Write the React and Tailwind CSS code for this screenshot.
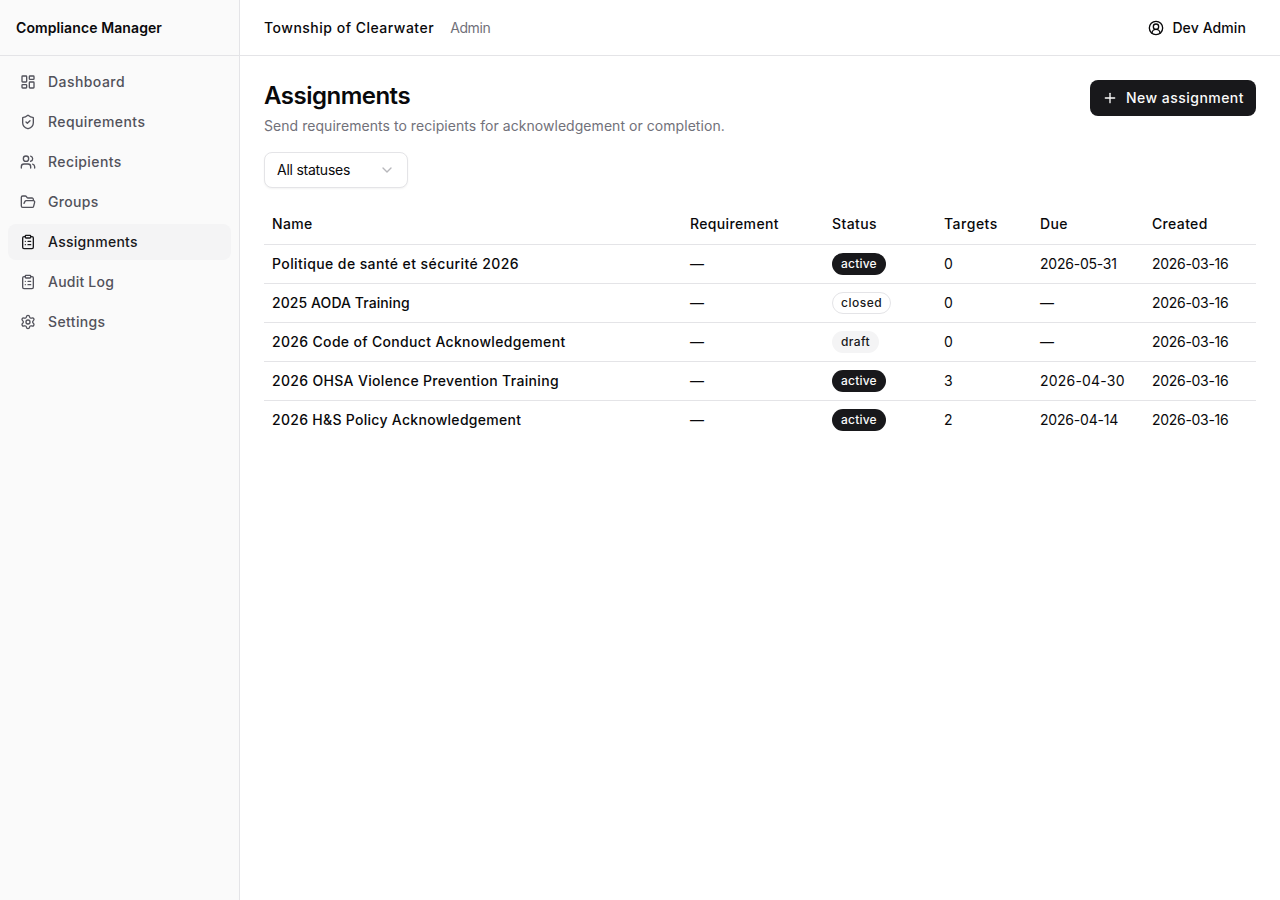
import { LayoutDashboard, ShieldCheck, Users, FolderOpen, ClipboardList, Settings, CircleUserRound, Plus, ChevronDown } from "lucide-react";

const nav = [
  ["Dashboard", LayoutDashboard, "tracking-[0.44px]"],
  ["Requirements", ShieldCheck, "tracking-[0.42px]"],
  ["Recipients", Users, "tracking-[0.4px]"],
  ["Groups", FolderOpen, "tracking-[0.33px]"],
  ["Assignments", ClipboardList, "tracking-[0.27px]", true],
  ["Audit Log", ClipboardList, "tracking-[0.22px]"],
  ["Settings", Settings, "tracking-[0.37px]"],
];

const rows = [
  ["Politique de santé et sécurité 2026", "tracking-[0.41px]", "active", "0", "2026-05-31", "tracking-[-0.23px]"],
  ["2025 AODA Training", "tracking-[0.08px]", "closed", "0", "—", ""],
  ["2026 Code of Conduct Acknowledgement", "tracking-[0.33px]", "draft", "0", "—", ""],
  ["2026 OHSA Violence Prevention Training", "tracking-[0.33px]", "active", "3", "2026-04-30", "tracking-[0.2px]"],
  ["2026 H&S Policy Acknowledgement", "tracking-[0.29px]", "active", "2", "2026-04-14", "tracking-[-0.2px]"],
];

const badge = {
  active: "bg-[#18181b] border-transparent text-[#fafafa] tracking-[0.2px]",
  closed: "bg-white border-[#e4e4e7] text-[#18181b] tracking-[0.5px]",
  draft: "bg-[#f4f4f5] border-transparent text-[#18181b] tracking-[0.4px]",
};

const heads = [
  ["Name", "w-[418px] tracking-[0.35px]"],
  ["Requirement", "w-[142px] tracking-[0.36px]"],
  ["Status", "w-[112px] tracking-[0.4px]"],
  ["Targets", "w-[96px] tracking-[0.5px]"],
  ["Due", "w-[112px] tracking-[0.3px]"],
  ["Created", "w-[112px] tracking-[0.35px]"],
];

export default function App() {
  return (
    <div className="flex h-[900px] bg-white text-[#09090b] font-['Inter',sans-serif] overflow-hidden">
      <aside className="w-[240px] shrink-0 bg-[#fafafa] border-r border-[#e4e4e7] flex flex-col">
        <div className="h-14 shrink-0 flex items-center px-4 border-b border-[#e4e4e7] text-sm font-semibold tracking-[0.1px]">Compliance Manager</div>
        <nav className="flex flex-col gap-1 p-2">
          {nav.map(([label, Icon, tracking, active]) => (
            <a key={label} className={"h-9 flex items-center gap-3 px-3 rounded-lg text-sm font-medium " + tracking + " " + (active ? "bg-[#f4f4f5] text-[#18181b]" : "text-[#52525b]")}>
              <Icon className="w-4 h-4" strokeWidth={2} />
              {label}
            </a>
          ))}
        </nav>
      </aside>
      <div className="flex-1 min-w-0 flex flex-col">
        <header className="h-14 shrink-0 border-b border-[#e4e4e7] flex items-center justify-between px-6">
          <div className="flex items-center gap-4 text-sm">
            <span className="font-medium tracking-[0.5px]">Township of Clearwater</span>
            <span className="text-[#71717a] tracking-[-0.4px]">Admin</span>
          </div>
          <div className="flex items-center gap-2 px-2.5 text-sm font-medium tracking-[0.1px]">
            <CircleUserRound className="w-4 h-4" />
            Dev Admin
          </div>
        </header>
        <main className="p-6">
          <div className="flex items-start justify-between">
            <div>
              <h1 className="text-2xl font-semibold leading-8 tracking-[-0.5px]">Assignments</h1>
              <p className="text-sm text-[#71717a] mt-1 leading-5 tracking-[0.05px]">Send requirements to recipients for acknowledgement or completion.</p>
            </div>
            <button className="h-9 px-3 flex items-center gap-2 rounded-lg bg-[#18181b] text-[#fafafa] text-sm font-medium tracking-[0.47px]">
              <Plus className="w-4 h-4" />
              New assignment
            </button>
          </div>
          <div className="mt-4 w-36 h-9 px-3 flex items-center justify-between rounded-lg border border-[#e4e4e7] bg-white text-sm shadow-xs tracking-[-0.25px]">
            All statuses
            <ChevronDown className="w-4 h-4 text-[#71717a] opacity-50" />
          </div>
          <table className="mt-4 w-full table-fixed text-sm border-collapse">
            <thead>
              <tr className="border-b border-[#e4e4e7] h-10 text-left">
                {heads.map(([h, cls]) => (
                  <th key={h} className={"px-2 font-medium " + cls}>{h}</th>
                ))}
              </tr>
            </thead>
            <tbody>
              {rows.map(([name, nameTrack, status, targets, due, dueTrack], i) => (
                <tr key={name} className={"h-[39px] " + (i < rows.length - 1 ? "border-b border-[#e4e4e7]" : "")}>
                  <td className={"px-2 font-medium " + nameTrack}>{name}</td>
                  <td className="px-2">—</td>
                  <td className="px-2">
                    <span className={"inline-flex items-center h-[22px] px-2 rounded-full border text-xs font-medium " + badge[status]}>{status}</span>
                  </td>
                  <td className="px-2">{targets}</td>
                  <td className={"px-2 " + dueTrack}>{due}</td>
                  <td className="px-2 tracking-[-0.3px]">2026-03-16</td>
                </tr>
              ))}
            </tbody>
          </table>
        </main>
      </div>
    </div>
  );
}
